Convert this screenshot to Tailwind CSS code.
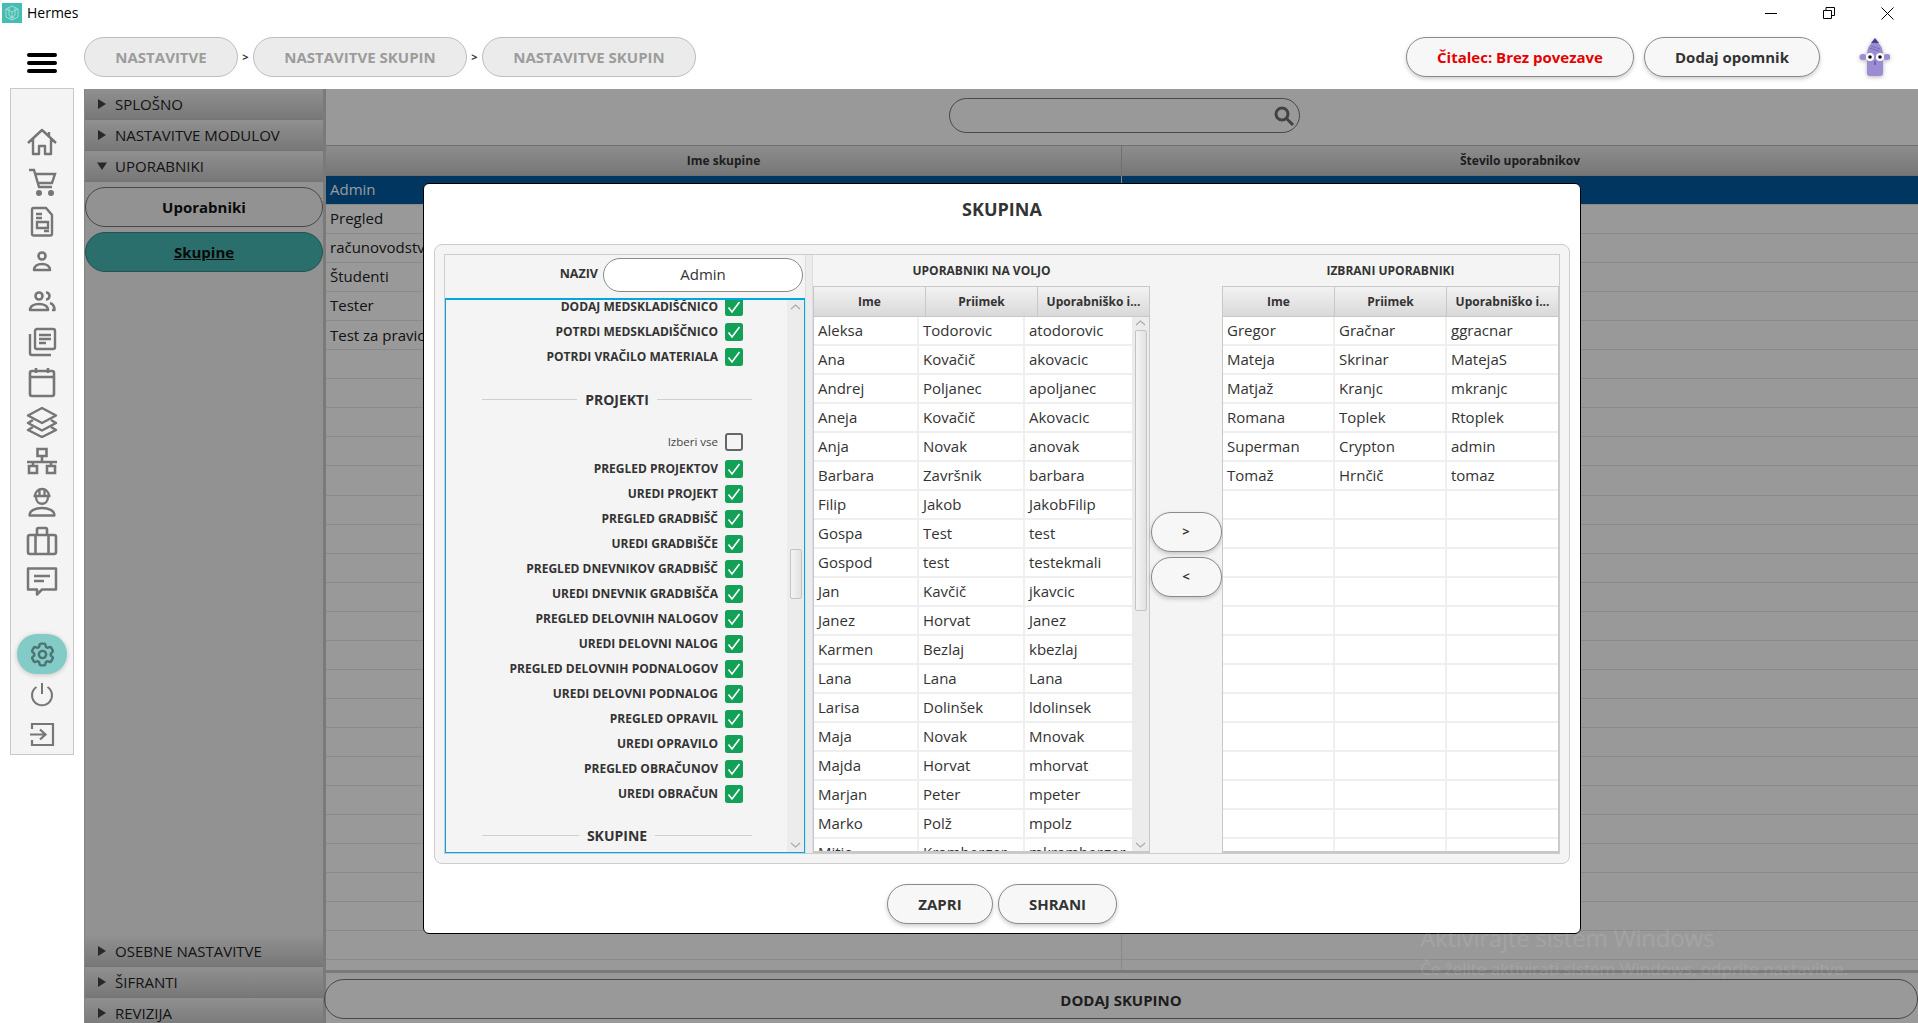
<!DOCTYPE html>
<html lang="en">
<head>
    <meta charset="UTF-8">
    <title>Hermes</title>
    <script src="https://cdn.jsdelivr.net/npm/@tailwindcss/browser@4"></script>
</head>
<body class="bg-white">
<div class="relative w-[1918px] h-[1023px] overflow-hidden flex flex-col bg-white text-[#333] [font-family:'Open_Sans',sans-serif]">

    <!-- title bar -->
    <div class="h-[30px] flex items-start shrink-0">
        <svg class="ml-[2px] mt-[3px]" width="20" height="20" viewBox="0 0 20 20">
            <rect width="20" height="20" fill="#45bdb3"/>
            <path d="M10 3l6 3v8l-6 3-6-3V6zM4 6l6 3 6-3M10 9v8M7 4.500v8l6 3M13 4.500v8l-6 3" fill="none" stroke="#a6e0da" stroke-width=".9"/>
        </svg>
        <span class="ml-[5px] mt-[3px] text-[14px] leading-[20px] text-black">Hermes</span>
        <div class="ml-auto flex items-center h-[26px]">
            <svg width="12" height="12" viewBox="0 0 12 12" class="mr-[46px]"><path d="M0 6.500h12" stroke="#000"/></svg>
            <svg width="12" height="12" viewBox="0 0 12 12" class="mr-[46px]"><path d="M.5 3.500h8v8h-8zM3 3.500V.5h8.500v8H8.500" fill="none" stroke="#000"/></svg>
            <svg width="13" height="13" viewBox="0 0 13 13" class="mr-[24px]"><path d="M.5.5l12 12M12.500.5l-12 12" stroke="#000"/></svg>
        </div>
    </div>

    <!-- top header -->
    <div class="h-[59px] flex items-start pt-[7px] shrink-0">
        <div class="ml-[27px] mt-[16px] w-[30px] flex flex-col gap-[4px]">
            <div class="h-[4px] rounded-full bg-black"></div>
            <div class="h-[4px] rounded-full bg-black"></div>
            <div class="h-[4px] rounded-full bg-black"></div>
        </div>
        <div class="ml-[27px] flex items-center text-[15px] font-bold text-[#9c9c9c]">
            <div class="w-[154px] h-[40px] rounded-full border border-[#bdbdbd] bg-[#ebebeb] flex items-center justify-center">NASTAVITVE</div>
            <span class="w-[15px] text-center text-[11px] text-[#333]">&gt;</span>
            <div class="w-[214px] h-[40px] rounded-full border border-[#bdbdbd] bg-[#ebebeb] flex items-center justify-center">NASTAVITVE SKUPIN</div>
            <span class="w-[15px] text-center text-[11px] text-[#333]">&gt;</span>
            <div class="w-[214px] h-[40px] rounded-full border border-[#bdbdbd] bg-[#ebebeb] flex items-center justify-center">NASTAVITVE SKUPIN</div>
        </div>
        <div class="ml-auto flex items-start">
            <div class="w-[228px] h-[40px] rounded-full border border-[#8a8a8a] bg-[#f7f7f7] shadow-[0_2px_4px_rgba(0,0,0,0.2)] flex items-center justify-center text-[15px] font-bold text-[#e60000]">Čitalec: Brez povezave</div>
            <div class="ml-[10px] w-[176px] h-[40px] rounded-full border border-[#8a8a8a] bg-[#f7f7f7] shadow-[0_2px_4px_rgba(0,0,0,0.2)] flex items-center justify-center text-[15px] font-bold">Dodaj opomnik</div>
            <svg class="ml-[39px] mr-[28px] mt-[1px] drop-shadow-[0_1px_2px_rgba(0,0,0,0.3)]" width="31" height="39" viewBox="0 0 31 39">
                <ellipse cx="4" cy="19" rx="3.500" ry="3" fill="#9b8cd4"/><ellipse cx="28" cy="19" rx="3.500" ry="3" fill="#9b8cd4"/>
                <path d="M16 1l5 6c2 3 3 6 3 10v18a3 3 0 0 1-3 3H11a3 3 0 0 1-3-3V17c0-4 1-7 3-10z" fill="#9b8cd4"/>
                <path d="M16 0l4 5h-8z" fill="#4b3f91"/>
                <path d="M10 10l10 3M12 8l9 3" stroke="#7c6db8" fill="none"/>
                <circle cx="11" cy="19" r="4" fill="#fff"/><circle cx="21" cy="19" r="4" fill="#fff"/>
                <circle cx="11" cy="19" r="1.800" fill="#111"/><circle cx="21" cy="19" r="1.800" fill="#111"/>
                <path d="M16 23v4" stroke="#4b3f91"/>
            </svg>
        </div>
    </div>

    <div class="flex flex-1 min-h-0 items-start">
        <!-- icon nav -->
        <div class="ml-[10px] -mt-px w-[64px] h-[667px] border border-[#c8c8c8] bg-[#f4f4f4] shrink-0 flex flex-col items-center pt-[33px] text-[#767676]">
            <div class="h-[40px] flex items-center justify-center"><svg width="32" height="32" viewBox="0 0 32 32" fill="none" stroke="currentColor" stroke-width="2.400" stroke-linejoin="round"><path d="M2 17L16 4l14 13M7 13v15h6v-8h6v8h6V13M23 6v4"/></svg></div>
            <div class="h-[40px] flex items-center justify-center"><svg width="32" height="32" viewBox="0 0 32 32" fill="none" stroke="currentColor" stroke-width="2.400"><path d="M3 4h5l5 17h13M9 8h20l-3 9H12"/><circle cx="13" cy="27" r="1.800" fill="currentColor"/><circle cx="25" cy="27" r="1.800" fill="currentColor"/></svg></div>
            <div class="h-[40px] flex items-center justify-center"><svg width="32" height="32" viewBox="0 0 32 32" fill="none" stroke="currentColor" stroke-width="2.400"><path d="M7 2h13l6 7v19a1.500 1.500 0 0 1-1.500 1.500h-17A1.500 1.500 0 0 1 6 28V3.500A1.500 1.500 0 0 1 7 2zM10 8h6M10 12h6M11 16h11v6H11zM18 25h5"/></svg></div>
            <div class="h-[40px] flex items-center justify-center"><svg width="32" height="32" viewBox="0 0 32 32" fill="none" stroke="currentColor" stroke-width="2.600"><circle cx="16" cy="10" r="3.500"/><path d="M8 24c0-4 3.500-6 8-6s8 2 8 6z" stroke-linejoin="round"/></svg></div>
            <div class="h-[40px] flex items-center justify-center"><svg width="32" height="32" viewBox="0 0 32 32" fill="none" stroke="currentColor" stroke-width="2.600"><circle cx="13" cy="10" r="3.500"/><path d="M4 24c0-4 4-6 9-6s9 2 9 6zM20 6.500a3.500 3.500 0 0 1 0 7M24 17c2.500.8 4.500 3 4.500 7H26" stroke-linejoin="round"/></svg></div>
            <div class="h-[40px] flex items-center justify-center"><svg width="32" height="32" viewBox="0 0 32 32" fill="none" stroke="currentColor" stroke-width="2.400"><rect x="9" y="3" width="20" height="20" rx="2"/><path d="M4 8v19a2 2 0 0 0 2 2h19M13 9h12M13 13h12M13 17h7"/></svg></div>
            <div class="h-[40px] flex items-center justify-center"><svg width="32" height="32" viewBox="0 0 32 32" fill="none" stroke="currentColor" stroke-width="2.600"><rect x="4" y="5" width="24" height="25" rx="2"/><path d="M4 11h24M10 2v5M22 2v5"/></svg></div>
            <div class="h-[40px] flex items-center justify-center"><svg width="32" height="32" viewBox="0 0 32 32" fill="none" stroke="currentColor" stroke-width="2.500" stroke-linejoin="round"><path d="M16 2l14 7.500-14 7.500L2 9.500z"/><path d="M7 14l-5 3 14 7.500L30 17l-5-3"/><path d="M7 21l-5 3 14 7 14-7-5-3"/></svg></div>
            <div class="h-[40px] flex items-center justify-center"><svg width="32" height="32" viewBox="0 0 32 32" fill="none" stroke="currentColor" stroke-width="2.600"><path d="M11.500 4h9v7h-9zM16 11v6M1 17h30M3 21h8v7H3zM21 21h8v7h-8zM7 17v4M25 17v4"/></svg></div>
            <div class="h-[40px] flex items-center justify-center"><svg width="32" height="32" viewBox="0 0 32 32" fill="none" stroke="currentColor" stroke-width="2.300" stroke-linejoin="round"><path d="M9 11a7 7 0 0 1 14 0M7.500 11h17M13.500 4v7M18.500 4v7M10 12c0 9 12 9 12 0"/><path d="M3.500 30.500c0-5 6-7.500 12.500-7.500s12.500 2.500 12.500 7.500z"/></svg></div>
            <div class="h-[40px] flex items-center justify-center"><svg width="32" height="32" viewBox="0 0 32 32" fill="none" stroke="currentColor" stroke-width="2.600"><rect x="2" y="10" width="28" height="19" rx="2"/><path d="M11 10V4.500A1.500 1.500 0 0 1 12.500 3h7A1.500 1.500 0 0 1 21 4.500V10M9.500 10v19M22.500 10v19"/></svg></div>
            <div class="h-[40px] flex items-center justify-center"><svg width="32" height="32" viewBox="0 0 32 32" fill="none" stroke="currentColor" stroke-width="2.500" stroke-linejoin="round"><path d="M2 3.500h28v21H16l-5 5v-5H2zM8 11h16M8 16h10"/></svg></div>
            <div class="mt-[33px] w-[50px] h-[40px] rounded-[20px] bg-[#82cbc6] shadow-[0_1px_5px_rgba(0,0,0,0.2)] flex items-center justify-center text-[#4d7371]">
                <svg width="29" height="29" viewBox="0 0 24 24" fill="none" stroke="currentColor" stroke-width="2"><path d="M9.594 3.940c.09-.542.56-.94 1.110-.94h2.593c.55 0 1.020.398 1.110.94l.213 1.281c.063.374.313.686.645.870.074.040.147.083.22.127.325.196.72.257 1.075.124l1.217-.456a1.125 1.125 0 011.370.49l1.296 2.247a1.125 1.125 0 01-.26 1.431l-1.003.827c-.293.241-.438.613-.43.992a7.723 7.723 0 010 .255c-.008.378.137.75.43.991l1.004.827c.424.35.534.955.26 1.430l-1.298 2.247a1.125 1.125 0 01-1.369.491l-1.217-.456c-.355-.133-.75-.072-1.076.124a6.470 6.470 0 01-.22.128c-.331.183-.581.495-.644.869l-.213 1.281c-.09.543-.56.94-1.110.94h-2.594c-.55 0-1.019-.398-1.110-.94l-.213-1.281c-.062-.374-.312-.686-.644-.87a6.520 6.520 0 01-.22-.127c-.325-.196-.72-.257-1.076-.124l-1.217.456a1.125 1.125 0 01-1.369-.49l-1.297-2.247a1.125 1.125 0 01.26-1.431l1.004-.827c.292-.24.437-.613.43-.991a6.932 6.932 0 010-.255c.007-.38-.138-.751-.43-.992l-1.004-.827a1.125 1.125 0 01-.26-1.430l1.297-2.247a1.125 1.125 0 011.370-.491l1.216.456c.356.133.751.072 1.076-.124.072-.044.146-.086.22-.128.332-.183.582-.495.644-.869l.214-1.280z"/><circle cx="12" cy="12" r="3"/></svg>
            </div>
            <div class="h-[40px] flex items-center justify-center"><svg width="28" height="28" viewBox="0 0 28 28" fill="none" stroke="currentColor" stroke-width="2"><path d="M14 3v11M8.500 7a10 10 0 1 0 11 0"/></svg></div>
            <div class="h-[40px] flex items-center justify-center"><svg width="28" height="28" viewBox="0 0 28 28" fill="none" stroke="currentColor" stroke-width="2.200"><path d="M4 9V4h21v21H4v-5M2 14.500h15M12 9.500l5.500 5-5.500 5"/></svg></div>
        </div>

        <!-- accordion sidebar -->
        <div class="ml-[10px] w-[239px] h-[940px] shrink-0 border-l border-[#dddddd] bg-[#f4f4f4] flex flex-col">
            <div id="acc-top"></div>
            <div class="mt-[5px] h-[40px] rounded-full border border-[#777] flex items-center justify-center text-[15px] font-bold text-[#111]"><span>Uporabniki</span></div>
            <div class="mt-[5px] h-[40px] rounded-full border border-[#3a8a85] bg-[#46b9b2] flex items-center justify-center text-[15px] font-bold text-[#111] underline"><span class="mt-[1px]">Skupine</span></div>
            <div id="acc-bottom" class="mt-auto"></div>
        </div>

        <!-- groups table -->
        <div class="flex-1 min-w-0 h-[934px] border-l-[3px] border-[#cccccc] flex flex-col bg-white">
            <div class="h-[56px] shrink-0 flex items-start justify-center pt-[9px]">
                <div class="w-[351px] h-[35px] ml-[5px] rounded-full border border-[#777] flex items-center justify-end pr-[4px]">
                    <svg width="22" height="22" viewBox="0 0 22 22" fill="none" stroke="#6e6e6e" stroke-width="3"><circle cx="9" cy="9" r="6"/><path d="M13.500 13.500L20 20"/></svg>
                </div>
            </div>
            <div class="h-[31px] shrink-0 flex border-y border-[#bbb] bg-gradient-to-b from-[#ebebeb] to-[#c6c6c6] text-[12px] font-bold">
                <div class="w-[796px] flex items-center justify-center border-r border-[#bbb]">Ime skupine</div>
                <div class="flex-1 flex items-center justify-center">Število uporabnikov</div>
            </div>
            <div id="groups" class="h-[797px] shrink-0 overflow-hidden border-b-[3px] border-[#cccccc]"></div>
            <div class="flex-1 -ml-[2px] pt-[6px]">
                <div class="h-[40px] pt-[2px] rounded-full border border-[#777] flex items-center justify-center text-[15px] font-bold">DODAJ SKUPINO</div>
            </div>
        </div>
    </div>

    <!-- dimmed backdrop -->
    <div class="absolute left-[84px] top-[89px] right-0 bottom-0 bg-black/40"></div>

    <!-- dialog -->
    <div class="absolute left-[423px] top-[183px] w-[1158px] h-[751px] rounded-[6px] border border-black bg-white flex flex-col items-center">
        <div class="h-[60px] w-full shrink-0 flex items-center justify-center text-[18px] font-bold pb-[9px]">SKUPINA</div>
        <div class="w-[1136px] h-[620px] shrink-0 rounded-[8px] border border-[#cccccc] bg-[#f4f4f4] p-[9px]">
            <div class="w-[1116px] h-[600px] border border-[#cccccc] flex">
                <!-- rights column -->
                <div class="w-[360px] shrink-0 flex flex-col">
                    <div class="h-[43px] shrink-0 flex items-center justify-end pr-[2px] pb-[4px] gap-[5px]">
                        <span class="text-[12.500px] font-bold">NAZIV</span>
                        <div class="w-[200px] h-[34px] rounded-full border border-[#8a8a8a] bg-white flex items-center justify-center text-[15px]">Admin</div>
                    </div>
                    <div class="flex-1 min-h-0 flex border border-t-2 border-[#00a7e1] overflow-hidden">
                        <div id="rights" class="flex-1 min-w-0 -mt-[6px]"></div>
                        <div class="w-[17px] shrink-0 bg-[#ececec] flex flex-col items-center">
                            <svg class="mt-[3px]" width="11" height="8" viewBox="0 0 11 8" fill="none" stroke="#aaa" stroke-width="1.200"><path d="M1 6l4.500-4L10 6"/></svg>
                            <div class="mt-[238px] w-[12px] h-[50px] rounded-[2px] border border-[#c4c4c4] bg-gradient-to-r from-[#f4f4f4] to-[#e2e2e2]"></div>
                            <svg class="mt-auto mb-[3px]" width="11" height="8" viewBox="0 0 11 8" fill="none" stroke="#aaa" stroke-width="1.200"><path d="M1 2l4.500 4L10 2"/></svg>
                        </div>
                    </div>
                </div>
                <div class="w-[8px] shrink-0 border-x border-[#dedede] bg-[#ececec]"></div>
                <!-- user lists -->
                <div class="flex-1 min-w-0 flex flex-col">
                    <div class="h-[31px] shrink-0 flex text-[12px] font-bold">
                        <div class="w-[337px] flex items-center justify-center">UPORABNIKI NA VOLJO</div>
                        <div class="w-[72px]"></div>
                        <div class="w-[337px] flex items-center justify-center">IZBRANI UPORABNIKI</div>
                    </div>
                    <div class="flex-1 min-h-0 flex">
                        <div id="left-table" class="w-[337px] shrink-0 flex flex-col overflow-hidden border border-b-2 border-[#c8c8c8]"></div>
                        <div class="w-[72px] shrink-0 flex flex-col items-center gap-[5px] pt-[226px]">
                            <div class="w-[71px] h-[40px] rounded-full border border-[#8a8a8a] bg-[#f7f7f7] shadow-[0_2px_4px_rgba(0,0,0,0.2)] flex items-center justify-center text-[13px] font-bold">&gt;</div>
                            <div class="w-[71px] h-[40px] rounded-full border border-[#8a8a8a] bg-[#f7f7f7] shadow-[0_2px_4px_rgba(0,0,0,0.2)] flex items-center justify-center text-[13px] font-bold">&lt;</div>
                        </div>
                        <div id="right-table" class="w-[337px] shrink-0 flex flex-col overflow-hidden border border-b-2 border-[#c8c8c8]"></div>
                    </div>
                </div>
            </div>
        </div>
        <div class="flex-1 flex items-start pt-[20px] gap-[5px] text-[15px] font-bold">
            <div class="w-[106px] h-[40px] rounded-full border border-[#8a8a8a] bg-[#f7f7f7] shadow-[0_2px_4px_rgba(0,0,0,0.2)] flex items-center justify-center">ZAPRI</div>
            <div class="w-[119px] h-[40px] rounded-full border border-[#8a8a8a] bg-[#f7f7f7] shadow-[0_2px_4px_rgba(0,0,0,0.2)] flex items-center justify-center">SHRANI</div>
        </div>
    </div>

    <!-- windows watermark -->
    <div class="absolute left-[1420px] top-[922px] text-white/10 pointer-events-none">
        <div class="text-[24px] leading-[32px] tracking-[-0.2px]">Aktivirajte sistem Windows</div>
        <div class="mt-[4px] text-[17px] leading-[22px]">Če želite aktivirati sistem Windows, odprite nastavitve.</div>
    </div>
</div>

<script>
    // accordion headers
    const accHeader = (name, open) => `
        <div class="h-[31px] flex items-center border-b border-[#c4c4c4] bg-gradient-to-b from-[#f0f0f0] to-[#c8c8c8] text-[15px] text-[#222]">
            <svg class="ml-[12px] mr-[8px]" width="10" height="10" viewBox="0 0 10 10" fill="#444"><path d="${open ? 'M0 1.500h10L5 9z' : 'M1 0l8 5-8 5z'}"/></svg>
            <span>${name}</span>
        </div>`;
    document.getElementById('acc-top').innerHTML =
        accHeader('SPLOŠNO') + accHeader('NASTAVITVE MODULOV') + accHeader('UPORABNIKI', true);
    document.getElementById('acc-bottom').innerHTML =
        accHeader('OSEBNE NASTAVITVE') + accHeader('ŠIFRANTI') + accHeader('REVIZIJA');

    // groups table behind the dialog
    const groups = ['Admin', 'Pregled', 'računovodstvo', 'Študenti', 'Tester', 'Test za pravice'];
    let groupRows = '';
    for (let i = 0; i < 28; i++) {
        const cls = i === 0 ? 'bg-[#005aa0] text-white' : 'text-[#222]';
        groupRows += `
            <div class="h-[29.050px] flex border-b border-[#e6e6e6] text-[15px] ${cls}">
                <div class="w-[796px] pl-[4px] -mt-px flex items-center border-r border-[#e6e6e6]">${groups[i] || ''}</div>
                <div class="flex-1"></div>
            </div>`;
    }
    document.getElementById('groups').innerHTML = groupRows;

    // rights list
    const checkBox = `
        <span class="w-[18px] h-[18px] rounded-[2.500px] bg-[#13a158] flex items-center justify-center">
            <svg width="14" height="14" viewBox="0 0 14 14" fill="none" stroke="#fff" stroke-width="1.600"><path d="M1.500 7.500l3.500 4.500L12.500 2"/></svg>
        </span>`;
    const right = (name) => `
        <div class="h-[25px] flex items-center justify-end gap-[7px] pr-[44px] text-[12px] font-bold">
            <span>${name}</span>${checkBox}
        </div>`;
    const section = (name) => `
        <div class="flex items-center pl-[36px] pr-[35px]">
            <div class="flex-1 h-px bg-[#cfcfcf]"></div>
            <span class="px-[8px] text-[14px] font-bold">${name}</span>
            <div class="flex-1 h-px bg-[#cfcfcf]"></div>
        </div>`;
    let rights = ['DODAJ MEDSKLADIŠČNICO', 'POTRDI MEDSKLADIŠČNICO', 'POTRDI VRAČILO MATERIALA'].map(right).join('');
    rights += `<div class="h-[20px]"></div>` + section('PROJEKTI') + `
        <div class="h-[22px]"></div>
        <div class="h-[20px] flex items-center justify-end gap-[7px] pr-[44px] text-[11.500px] text-[#444]">
            <span>Izberi vse</span>
            <span class="w-[18px] h-[18px] rounded-[3px] border-2 border-[#666] bg-[#f4f4f4]"></span>
        </div>
        <div class="h-[4px]"></div>`;
    rights += ['PREGLED PROJEKTOV', 'UREDI PROJEKT', 'PREGLED GRADBIŠČ', 'UREDI GRADBIŠČE', 'PREGLED DNEVNIKOV GRADBIŠČ',
        'UREDI DNEVNIK GRADBIŠČA', 'PREGLED DELOVNIH NALOGOV', 'UREDI DELOVNI NALOG', 'PREGLED DELOVNIH PODNALOGOV',
        'UREDI DELOVNI PODNALOG', 'PREGLED OPRAVIL', 'UREDI OPRAVILO', 'PREGLED OBRAČUNOV', 'UREDI OBRAČUN'].map(right).join('');
    rights += `<div class="h-[19px]"></div>` + section('SKUPINE');
    document.getElementById('rights').innerHTML = rights;

    // user tables
    const tableHead = `
        <div class="h-[30px] shrink-0 flex border-b border-[#c8c8c8] bg-gradient-to-b from-[#f2f2f2] to-[#d9d9d9] text-[12px] font-bold">
            <div class="flex-1 flex items-center justify-center border-r border-[#c8c8c8]">Ime</div>
            <div class="flex-1 flex items-center justify-center border-r border-[#c8c8c8]">Priimek</div>
            <div class="flex-1 flex items-center justify-center">Uporabniško i...</div>
        </div>`;
    const userRow = (u, widths) => `
        <div class="h-[29px] shrink-0 flex border-b-2 border-[#efefef] text-[15px] leading-[26px] text-[#333]">
            <div class="pl-[4px] border-r-2 border-[#efefef] ${widths[0]}">${u[0] || ''}</div>
            <div class="pl-[4px] border-r-2 border-[#efefef] ${widths[1]}">${u[1] || ''}</div>
            <div class="pl-[4px] flex-1 whitespace-nowrap">${u[2] || ''}</div>
        </div>`;

    const available = [
        ['Aleksa', 'Todorovic', 'atodorovic'], ['Ana', 'Kovačič', 'akovacic'], ['Andrej', 'Poljanec', 'apoljanec'],
        ['Aneja', 'Kovačič', 'Akovacic'], ['Anja', 'Novak', 'anovak'], ['Barbara', 'Završnik', 'barbara'],
        ['Filip', 'Jakob', 'JakobFilip'], ['Gospa', 'Test', 'test'], ['Gospod', 'test', 'testekmali'],
        ['Jan', 'Kavčič', 'jkavcic'], ['Janez', 'Horvat', 'Janez'], ['Karmen', 'Bezlaj', 'kbezlaj'],
        ['Lana', 'Lana', 'Lana'], ['Larisa', 'Dolinšek', 'ldolinsek'], ['Maja', 'Novak', 'Mnovak'],
        ['Majda', 'Horvat', 'mhorvat'], ['Marjan', 'Peter', 'mpeter'], ['Marko', 'Polž', 'mpolz'],
        ['Mitja', 'Kramberger', 'mkramberger']
    ];
    const selected = [
        ['Gregor', 'Gračnar', 'ggracnar'], ['Mateja', 'Skrinar', 'MatejaS'], ['Matjaž', 'Kranjc', 'mkranjc'],
        ['Romana', 'Toplek', 'Rtoplek'], ['Superman', 'Crypton', 'admin'], ['Tomaž', 'Hrnčič', 'tomaz']
    ];
    const leftWidths = ['w-[105px]', 'w-[106px]'];
    const rightWidths = ['w-[112px]', 'w-[112px]'];

    document.getElementById('left-table').innerHTML = tableHead + `
        <div class="flex-1 min-h-0 flex">
            <div class="flex-1 min-w-0 bg-white overflow-hidden">${available.map(u => userRow(u, leftWidths)).join('')}</div>
            <div class="w-[17px] shrink-0 bg-[#ececec] flex flex-col items-center">
                <svg class="mt-[2px]" width="11" height="8" viewBox="0 0 11 8" fill="none" stroke="#aaa" stroke-width="1.200"><path d="M1 6l4.500-4L10 6"/></svg>
                <div class="mt-[3px] w-[12px] h-[281px] rounded-[2px] border border-[#c4c4c4] bg-gradient-to-r from-[#f4f4f4] to-[#e2e2e2]"></div>
                <svg class="mt-auto mb-[2px]" width="11" height="8" viewBox="0 0 11 8" fill="none" stroke="#aaa" stroke-width="1.200"><path d="M1 2l4.500 4L10 2"/></svg>
            </div>
        </div>`;

    const emptyRows = Array.from({ length: 20 }, (_, i) => selected[i] || []);
    document.getElementById('right-table').innerHTML = tableHead + `
        <div class="flex-1 min-h-0 bg-white overflow-hidden">${emptyRows.map(u => userRow(u, rightWidths)).join('')}</div>`;
</script>
</body>
</html>
